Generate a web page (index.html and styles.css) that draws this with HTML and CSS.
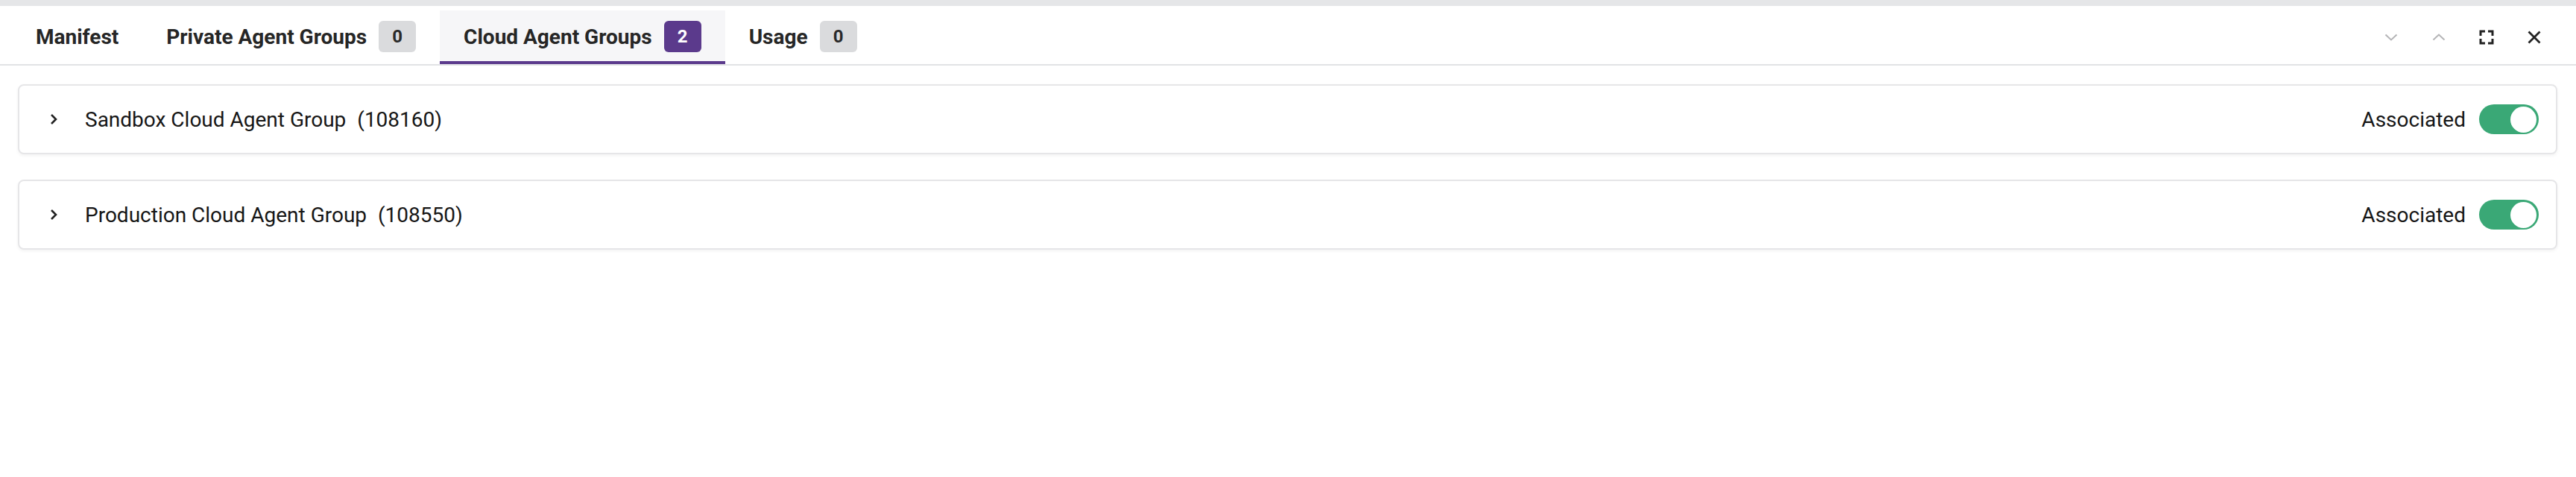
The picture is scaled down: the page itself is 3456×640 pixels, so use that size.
FILE: index.html
```html
<!DOCTYPE html>
<html lang="en">
<head>
    <meta charset="UTF-8">
    <meta name="viewport" content="width=device-width, initial-scale=1.0">
    <title>Cloud Agent Groups</title>
    <link rel="stylesheet" href="styles.css">
</head>
<body>
    <div class="panel">
        <div class="tabbar">
            <nav class="tabs">
                <div class="tab">Manifest</div>
                <div class="tab">Private Agent Groups <span class="count">0</span></div>
                <div class="tab active">Cloud Agent Groups <span class="count">2</span></div>
                <div class="tab">Usage <span class="count">0</span></div>
            </nav>
            <div class="actions">
                <button class="icon-btn muted" title="Next">
                    <svg width="24" height="24" viewBox="0 0 24 24"><path d="M4.5 8.5L12 15.5L19.5 8.5" fill="none" stroke="currentColor" stroke-width="2"/></svg>
                </button>
                <button class="icon-btn muted" title="Previous">
                    <svg width="24" height="24" viewBox="0 0 24 24"><path d="M4.5 15.5L12 8.5L19.5 15.5" fill="none" stroke="currentColor" stroke-width="2"/></svg>
                </button>
                <button class="icon-btn" title="Maximize">
                    <svg width="20" height="20" viewBox="0 0 20 20"><path d="M2 8V2H8M12 2H18V8M18 12V18H12M8 18H2V12" fill="none" stroke="currentColor" stroke-width="3"/></svg>
                </button>
                <button class="icon-btn" title="Close">
                    <svg width="20" height="20" viewBox="0 0 20 20"><path d="M2.5 2.5L17.5 17.5M17.5 2.5L2.5 17.5" fill="none" stroke="currentColor" stroke-width="2.8"/></svg>
                </button>
            </div>
        </div>

        <div class="groups">
            <div class="card">
                <svg class="expand" width="24" height="24" viewBox="0 0 24 24"><path d="M9 6L15 12L9 18" fill="none" stroke="currentColor" stroke-width="2.6"/></svg>
                <div class="card-title">Sandbox Cloud Agent Group <span class="group-id">(108160)</span></div>
                <div class="status">
                    <span>Associated</span>
                    <span class="toggle on"><span class="knob"></span></span>
                </div>
            </div>
            <div class="card">
                <svg class="expand" width="24" height="24" viewBox="0 0 24 24"><path d="M9 6L15 12L9 18" fill="none" stroke="currentColor" stroke-width="2.6"/></svg>
                <div class="card-title">Production Cloud Agent Group <span class="group-id">(108550)</span></div>
                <div class="status">
                    <span>Associated</span>
                    <span class="toggle on"><span class="knob"></span></span>
                </div>
            </div>
        </div>
    </div>
</body>
</html>
```

FILE: styles.css
```css
body {
    font-family: Roboto, "Liberation Sans", Arial, sans-serif;
    margin: 0;
    padding: 0;
    background-color: #ffffff;
    color: #161616;
}
.panel {
    border-top: 8px solid #e5e6e8;
    min-height: 632px;
}
.tabbar {
    display: flex;
    justify-content: space-between;
    padding: 6px 32px 0 16px;
    border-bottom: 2px solid #e2e3e5;
}
.tabs {
    display: flex;
}
.tab {
    display: flex;
    align-items: center;
    gap: 16px;
    height: 72px;
    box-sizing: border-box;
    padding: 2px 32px 0 32px;
    border-bottom: 4px solid transparent;
    font-size: 28px;
    font-weight: 700;
    color: #262626;
    cursor: pointer;
}
.tab.active {
    background-color: #f6f6f8;
    border-bottom-color: #5b3a8c;
}
.count {
    display: flex;
    align-items: center;
    justify-content: center;
    width: 50px;
    height: 42px;
    box-sizing: border-box;
    border-radius: 6px;
    background-color: #dadbdd;
    color: #2a2a2a;
    font-size: 24px;
    font-weight: 700;
}
.tab.active .count {
    background-color: #5b3a8c;
    color: #ffffff;
}
.actions {
    display: flex;
    align-items: center;
    gap: 16px;
}
.icon-btn {
    display: flex;
    align-items: center;
    justify-content: center;
    width: 48px;
    height: 48px;
    padding: 0;
    border: none;
    background: none;
    color: #222222;
    cursor: pointer;
}
.icon-btn.muted {
    color: #b4b4b6;
}
.groups {
    display: flex;
    flex-direction: column;
    gap: 34px;
    padding: 25px 25px 0 24px;
}
.card {
    display: flex;
    align-items: center;
    gap: 30px;
    height: 94px;
    box-sizing: border-box;
    padding: 0 23px 0 34px;
    border: 2px solid #e6e6e8;
    border-radius: 8px;
    box-shadow: 0 2px 4px rgba(0, 0, 0, 0.05);
    background-color: #ffffff;
}
.expand {
    color: #222222;
    flex-shrink: 0;
}
.card-title {
    flex: 1;
    font-size: 28px;
    color: #161616;
}
.group-id {
    margin-left: 8px;
}
.status {
    display: flex;
    align-items: center;
    gap: 18px;
    font-size: 28px;
    color: #161616;
}
.toggle {
    display: flex;
    align-items: center;
    justify-content: flex-end;
    width: 80px;
    height: 40px;
    box-sizing: border-box;
    padding: 0 3px;
    border-radius: 20px;
    background-color: #c8c8ca;
}
.toggle.on {
    background-color: #3aa876;
}
.knob {
    width: 35px;
    height: 35px;
    border-radius: 50%;
    background-color: #ffffff;
}
```
